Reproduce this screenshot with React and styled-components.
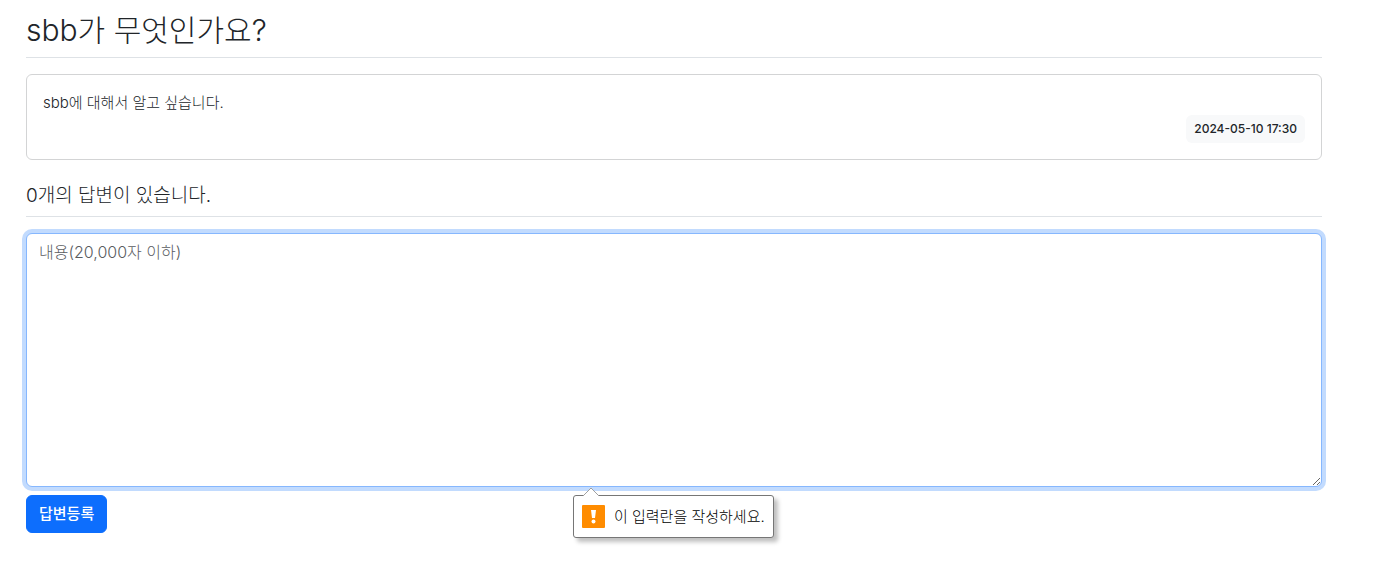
import React from "react";
import styled, { createGlobalStyle } from "styled-components";

const GlobalStyle = createGlobalStyle`
  *, *::before, *::after {
    box-sizing: border-box;
  }

  body {
    margin: 0;
    background: #fff;
    color: #212529;
    font-family: Inter, "Noto Sans CJK KR", sans-serif;
    font-size: 15px;
    font-weight: 300;
    line-height: 24px;
  }
`;

const Container = styled.main`
  padding: 11px 52px 28px 26px;
`;

const Title = styled.h2`
  margin: 0 0 16px;
  padding-bottom: 8px;
  border-bottom: 1px solid #dee2e6;
  font-size: 30px;
  font-weight: 300;
  line-height: 38px;
`;

const Card = styled.article`
  margin-bottom: 16px;
  padding: 16px;
  border: 1px solid #d3d4d5;
  border-radius: 6px;
`;

const CardText = styled.p`
  margin: 0;
  color: #212529;
`;

const CardFooter = styled.div`
  display: flex;
  justify-content: flex-end;
`;

const DateBadge = styled.time`
  padding: 8px;
  border-radius: 6px;
  background: #f8f9fa;
  font-size: 12px;
  font-weight: 500;
  line-height: 12px;
`;

const AnswerCount = styled.h5`
  margin: 0 0 16px;
  padding: 8px 0;
  border-bottom: 1px solid #dee2e6;
  font-size: 19px;
  font-weight: 300;
  line-height: 24px;
`;

const AnswerForm = styled.form`
  display: flex;
  flex-direction: column;
  align-items: flex-start;
  gap: 8px;
`;

const Field = styled.div`
  position: relative;
  display: flex;
  width: 100%;
`;

const ContentArea = styled.textarea`
  width: 100%;
  height: 254px;
  padding: 6px 12px;
  border: 1px solid #86b7fe;
  border-radius: 6px;
  outline: 0;
  box-shadow: 0 0 0 4px #c2dbfe;
  color: inherit;
  font: inherit;
  font-size: 16px;
  resize: vertical;

  &::placeholder {
    color: #595c5f;
    opacity: 1;
  }
`;

const SubmitButton = styled.button`
  padding: 6px 12px;
  border: 1px solid #0d6efd;
  border-radius: 6px;
  background: #0d6efd;
  color: #fff;
  font: inherit;
  font-weight: 500;
`;

const Tooltip = styled.div`
  position: absolute;
  top: 100%;
  left: calc(50% - 101px);
  display: flex;
  align-items: center;
  gap: 9px;
  margin-top: 8px;
  padding: 8px;
  border: 1px solid #767676;
  border-radius: 3px;
  background: #fff;
  box-shadow: 4px 4px 4px rgba(0, 0, 0, 0.25);
  color: #000;
  font-size: 15px;
  line-height: 25px;
  white-space: nowrap;
`;

const TooltipArrow = styled.svg`
  position: absolute;
  bottom: 100%;
  left: 8px;
`;

function App() {
  return (
    <>
      <GlobalStyle />
      <Container>
        <Title>sbb가 무엇인가요?</Title>
        <Card>
          <CardText>sbb에 대해서 알고 싶습니다.</CardText>
          <CardFooter>
            <DateBadge dateTime="2024-05-10T17:30">2024-05-10 17:30</DateBadge>
          </CardFooter>
        </Card>
        <AnswerCount>0개의 답변이 있습니다.</AnswerCount>
        <AnswerForm>
          <Field>
            <ContentArea
              aria-label="내용"
              placeholder="내용(20,000자 이하)"
              required
            />
            <Tooltip role="alert">
              <TooltipArrow width="18" height="9" viewBox="0 0 18 9">
                <path d="M1 9 9 1l8 8z" fill="#fff" />
                <path d="M1 9 9 1l8 8" fill="none" stroke="#a0a0a0" />
              </TooltipArrow>
              <svg width="23" height="23" viewBox="0 0 23 23">
                <rect width="23" height="23" rx="1" fill="#ff8c00" />
                <path d="M9 5h5l-1 8h-3z" fill="#fff" />
                <circle cx="11.5" cy="16.5" r="2" fill="#fff" />
              </svg>
              이 입력란을 작성하세요.
            </Tooltip>
          </Field>
          <SubmitButton type="submit">답변등록</SubmitButton>
        </AnswerForm>
      </Container>
    </>
  );
}

export default App;
